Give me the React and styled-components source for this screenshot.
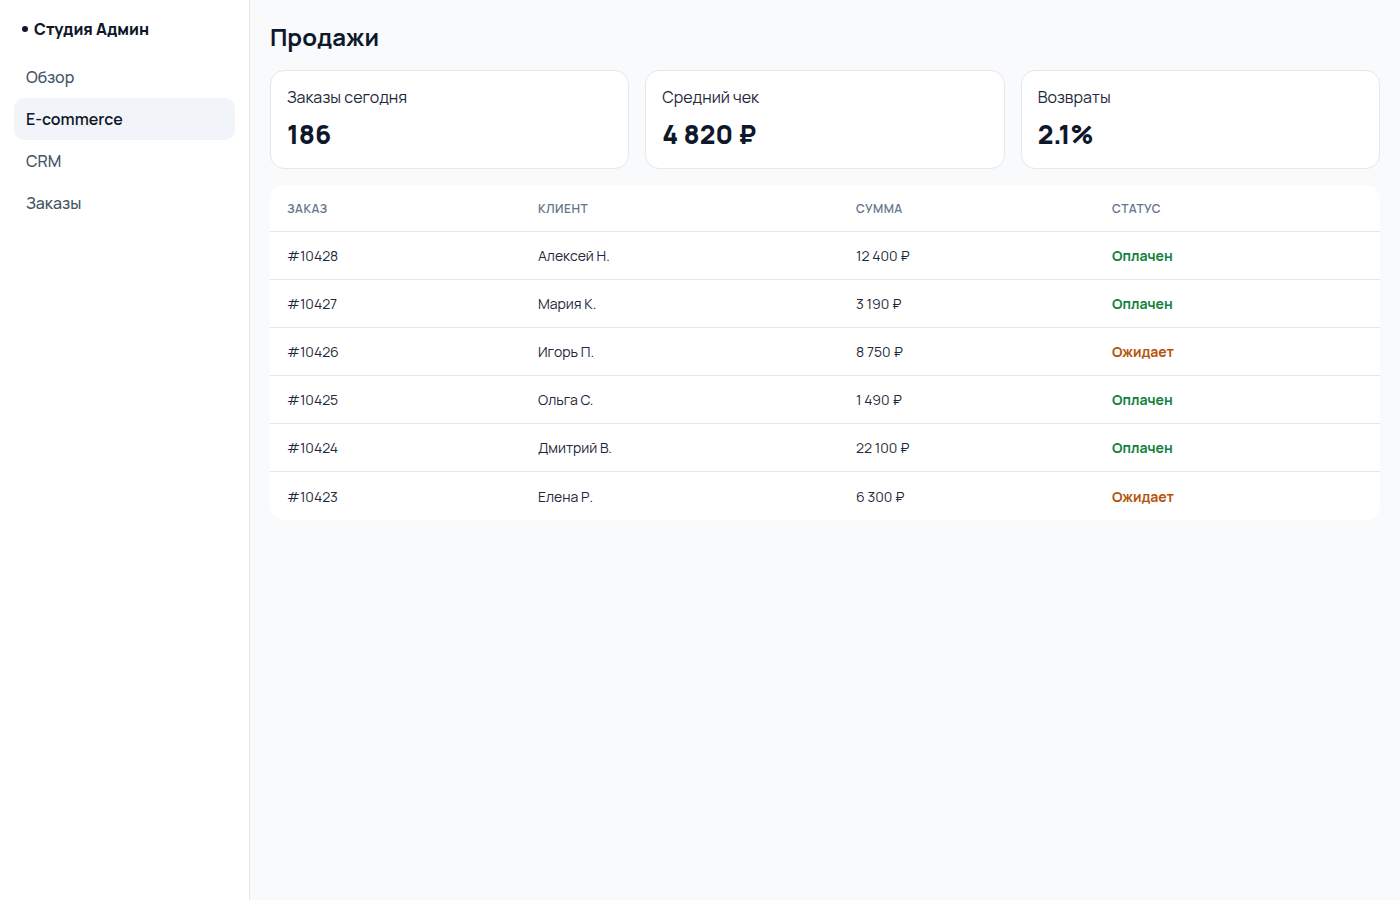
import React from 'react'
import styled, { createGlobalStyle } from 'styled-components'

const Global = createGlobalStyle`
  * { box-sizing: border-box; }
  body {
    margin: 0;
    font-family: Manrope, Inter, "Noto Sans", sans-serif;
    color: #0f172a;
    background: #f8fafc;
  }
`

const Layout = styled.div`
  display: flex;
  min-height: 900px;
`

const Sidebar = styled.aside`
  width: 250px;
  flex-shrink: 0;
  padding: 18px 14px;
  background: #ffffff;
  border-right: 1px solid #e5e7eb;
`

const Brand = styled.div`
  display: flex;
  align-items: center;
  gap: 6px;
  padding: 0 8px;
  margin-bottom: 16px;
  font-size: 16px;
  line-height: 22px;
  font-weight: 800;
  color: #0f172a;

  &::before {
    content: '';
    width: 6px;
    height: 6px;
    border-radius: 50%;
    background: #0f172a;
  }
`

const Nav = styled.nav`
  display: flex;
  flex-direction: column;
`

const NavItem = styled.a`
  display: flex;
  align-items: center;
  height: 42px;
  padding: 0 12px;
  border-radius: 10px;
  font-size: 16px;
  font-weight: ${p => (p.$active ? 600 : 500)};
  color: ${p => (p.$active ? '#0f172a' : '#475569')};
  background: ${p => (p.$active ? '#f1f5f9' : 'transparent')};
  text-decoration: none;
  cursor: pointer;
`

const Main = styled.main`
  flex: 1;
  padding: 20px;
`

const Title = styled.h1`
  margin: 0 0 16px;
  font-size: 24px;
  line-height: 34px;
  font-weight: 700;
  color: #0f172a;
`

const Stats = styled.div`
  display: grid;
  grid-template-columns: repeat(3, 1fr);
  gap: 16px;
  margin-bottom: 16px;
`

const Card = styled.div`
  height: 99px;
  padding: 15px 16px;
  background: #ffffff;
  border: 1px solid #e5e7eb;
  border-radius: 14px;
`

const Label = styled.div`
  font-size: 16px;
  line-height: 22px;
  color: #1e293b;
`

const Value = styled.div`
  margin-top: 10px;
  font-size: 26px;
  line-height: 32px;
  font-weight: 800;
  color: #0f172a;
`

const Table = styled.div`
  background: #ffffff;
  border-radius: 14px;
  overflow: hidden;
`

const Row = styled.div`
  display: grid;
  grid-template-columns: 251px 318px 256px 1fr;
  align-items: center;
  height: ${p => (p.$head ? '47px' : '48px')};
  border-bottom: 1px solid #e5e7eb;

  &:last-child {
    border-bottom: none;
  }
`

const Th = styled.div`
  padding: 0 16px 0 17px;
  font-size: 12px;
  font-weight: 600;
  letter-spacing: 0.04em;
  text-transform: uppercase;
  color: #64748b;
`

const Td = styled.div`
  padding: 0 16px 0 17px;
  font-size: 14px;
  color: #1e293b;
`

const Status = styled(Td)`
  font-weight: 700;
  color: ${p => (p.$paid ? '#15803d' : '#b45309')};
`

const stats = [
  { label: 'Заказы сегодня', value: '186' },
  { label: 'Средний чек', value: '4 820 ₽' },
  { label: 'Возвраты', value: '2.1%' },
]

const orders = [
  ['#10428', 'Алексей Н.', '12 400 ₽', true],
  ['#10427', 'Мария К.', '3 190 ₽', true],
  ['#10426', 'Игорь П.', '8 750 ₽', false],
  ['#10425', 'Ольга С.', '1 490 ₽', true],
  ['#10424', 'Дмитрий В.', '22 100 ₽', true],
  ['#10423', 'Елена Р.', '6 300 ₽', false],
]

export default function App() {
  return (
    <Layout>
      <Global />
      <Sidebar>
        <Brand>Студия Админ</Brand>
        <Nav>
          <NavItem>Обзор</NavItem>
          <NavItem $active>E-commerce</NavItem>
          <NavItem>CRM</NavItem>
          <NavItem>Заказы</NavItem>
        </Nav>
      </Sidebar>
      <Main>
        <Title>Продажи</Title>
        <Stats>
          {stats.map(s => (
            <Card key={s.label}>
              <Label>{s.label}</Label>
              <Value>{s.value}</Value>
            </Card>
          ))}
        </Stats>
        <Table>
          <Row $head>
            <Th>Заказ</Th>
            <Th>Клиент</Th>
            <Th>Сумма</Th>
            <Th>Статус</Th>
          </Row>
          {orders.map(([id, name, sum, paid]) => (
            <Row key={id}>
              <Td>{id}</Td>
              <Td>{name}</Td>
              <Td>{sum}</Td>
              <Status $paid={paid}>{paid ? 'Оплачен' : 'Ожидает'}</Status>
            </Row>
          ))}
        </Table>
      </Main>
    </Layout>
  )
}
